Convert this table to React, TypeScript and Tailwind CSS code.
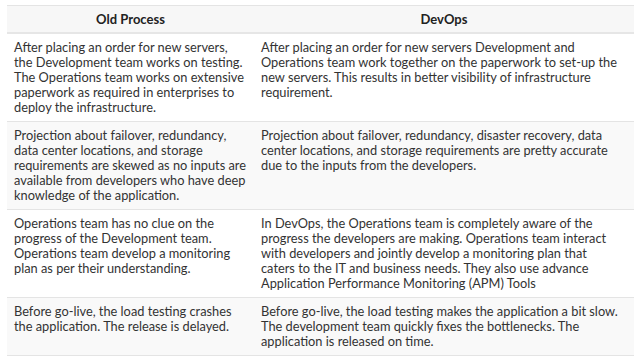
const rows: { old: string[]; devops: string[] }[] = [
  {
    old: [
      "After placing an order for new servers,",
      "the Development team works on testing.",
      "The Operations team works on extensive",
      "paperwork as required in enterprises to",
      "deploy the infrastructure.",
    ],
    devops: [
      "After placing an order for new servers Development and",
      "Operations team work together on the paperwork to set-up the",
      "new servers. This results in better visibility of infrastructure",
      "requirement.",
    ],
  },
  {
    old: [
      "Projection about failover, redundancy,",
      "data center locations, and storage",
      "requirements are skewed as no inputs are",
      "available from developers who have deep",
      "knowledge of the application.",
    ],
    devops: [
      "Projection about failover, redundancy, disaster recovery, data",
      "center locations, and storage requirements are pretty accurate",
      "due to the inputs from the developers.",
    ],
  },
  {
    old: [
      "Operations team has no clue on the",
      "progress of the Development team.",
      "Operations team develop a monitoring",
      "plan as per their understanding.",
    ],
    devops: [
      "In DevOps, the Operations team is completely aware of the",
      "progress the developers are making. Operations team interact",
      "with developers and jointly develop a monitoring plan that",
      "caters to the IT and business needs. They also use advance",
      "Application Performance Monitoring (APM) Tools",
    ],
  },
  {
    old: [
      "Before go-live, the load testing crashes",
      "the application. The release is delayed.",
    ],
    devops: [
      "Before go-live, the load testing makes the application a bit slow.",
      "The development team quickly fixes the bottlenecks. The",
      "application is released on time.",
    ],
  },
];

function Lines({ lines }: { lines: string[] }) {
  return (
    <>
      {lines.map((l, i) => (
        <div key={i} className="whitespace-nowrap">
          {l}
        </div>
      ))}
    </>
  );
}

export default function App() {
  return (
    <div className="h-[364px] w-[640px] bg-white pl-[7px] pt-[5px] font-['Lato',sans-serif] text-[12.8px] leading-[15px] text-[#333]">
      <div className="w-[627px] border-t border-[#e4e4e4]">
        <div className="grid h-[28px] grid-cols-[247px_380px] items-center border-b-2 border-[#e6e6e6] bg-[#f7f7f7] text-[13px] font-bold text-[#222]">
          <div className="text-center">Old Process</div>
          <div className="text-center">DevOps</div>
        </div>
        {rows.map((r, i) => (
          <div
            key={i}
            className={`grid grid-cols-[247px_380px] border-b border-[#e4e4e4] py-[6px] ${
              i % 2 === 1 ? "bg-[#f9f9f9]" : "bg-white"
            }`}
          >
            <div className="pl-[7px]">
              <Lines lines={r.old} />
            </div>
            <div className="pl-[7px]">
              <Lines lines={r.devops} />
            </div>
          </div>
        ))}
      </div>
    </div>
  );
}
